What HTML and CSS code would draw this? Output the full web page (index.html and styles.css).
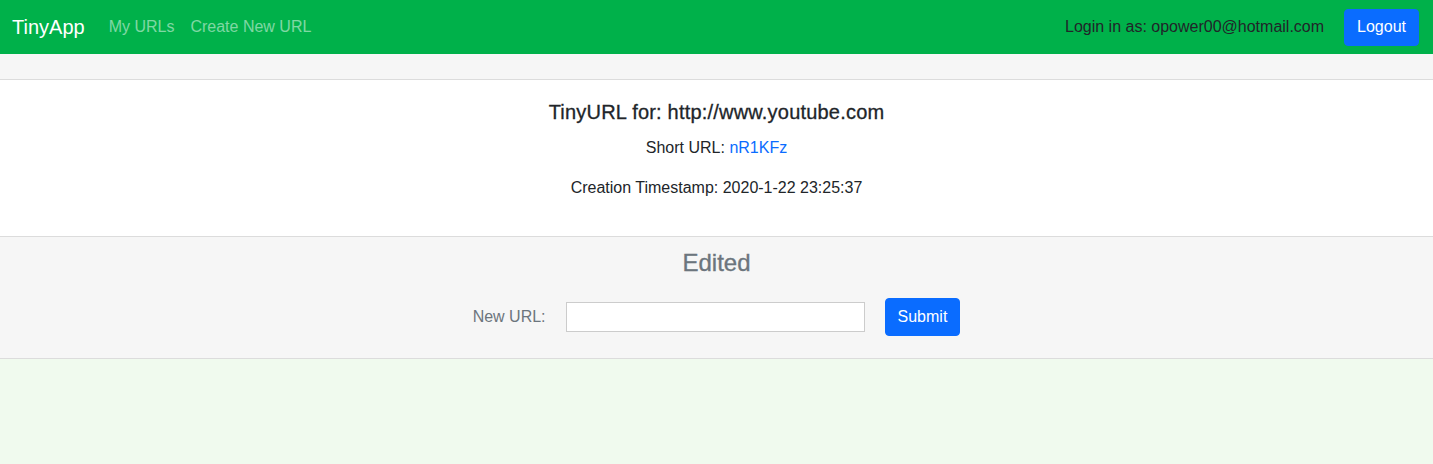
FILE: index.html
```html
<!DOCTYPE html>
<html lang="en">
<head>
<meta charset="utf-8">
<title>TinyApp</title>
<link rel="stylesheet" href="styles.css">
</head>
<body>
<nav class="navbar">
  <div class="nav-left">
    <a class="brand" href="#">TinyApp</a>
    <a class="nav-link" href="#">My URLs</a>
    <a class="nav-link" href="#">Create New URL</a>
  </div>
  <div class="nav-right">
    <span class="login-text">Login in as: opower00@hotmail.com</span>
    <button class="btn btn-primary btn-logout" type="button">Logout</button>
  </div>
</nav>
<main class="card">
  <div class="card-header"></div>
  <div class="card-body">
    <h5 class="card-title">TinyURL for: http://www.youtube.com</h5>
    <p class="card-text">Short URL: <a href="#" class="link">nR1KFz</a></p>
    <p class="card-text">Creation Timestamp: 2020-1-22 23:25:37</p>
  </div>
  <div class="card-footer">
    <h4 class="footer-title">Edited</h4>
    <form class="form-inline">
      <label class="form-label" for="newurl">New URL:</label>
      <input class="form-input" id="newurl" type="text">
      <button class="btn btn-primary btn-submit" type="submit">Submit</button>
    </form>
  </div>
</main>
</body>
</html>
```
FILE: styles.css
```css
* { box-sizing: border-box; }
html, body { margin: 0; padding: 0; }
body {
  font-family: "Liberation Sans", Arial, sans-serif;
  font-size: 16px;
  line-height: 1.5;
  color: #212529;
  background: #f0faee;
  min-height: 464px;
}
.navbar {
  background: #00b14a;
  height: 54px;
  padding: 0 14px 0 12px;
  display: flex;
  align-items: center;
  justify-content: space-between;
}
.nav-left { display: flex; align-items: center; }
.brand {
  color: #fff;
  font-size: 20px;
  text-decoration: none;
  margin-right: 16px;
}
.nav-link {
  color: rgba(255,255,255,0.5);
  text-decoration: none;
  padding: 0 8px;
}
.nav-right { display: flex; align-items: center; gap: 20px; }
.login-text { color: #212529; }
.btn {
  font-family: inherit;
  font-size: 16px;
  line-height: 1.5;
  border: 1px solid #0a6cff;
  background: #0a6cff;
  color: #fff;
  border-radius: 4px;
  padding: 6px 12px;
  cursor: pointer;
}
.btn-logout { height: 37px; padding: 5px 12px; }
.card { background: #fff; }
.card-header {
  height: 26px;
  background: #f6f6f6;
  border-bottom: 1px solid #dcdcdc;
}
.card-body {
  padding: 20px;
  text-align: center;
}
.card-title {
  font-size: 20px;
  font-weight: 500;
  line-height: 1.2;
  margin: 0 0 12px;
  -webkit-text-stroke: 0.3px #212529;
  letter-spacing: 0.2px;
}
.card-text { margin: 0 0 16px; }
.link { color: #0a6cff; text-decoration: none; }
.card-footer {
  background: #f6f6f6;
  border-top: 1px solid #dcdcdc;
  border-bottom: 1px solid #dcdcdc;
  padding: 12px 20px 22px;
  text-align: center;
}
.footer-title {
  font-size: 24px;
  font-weight: 500;
  line-height: 1.2;
  color: #6c757d;
  margin: 0 0 20px;
  -webkit-text-stroke: 0.35px #6c757d;
}
.form-inline {
  display: flex;
  justify-content: center;
  align-items: center;
}
.form-label { color: #6c757d; margin-right: 20px; }
.form-input {
  width: 299px;
  height: 30px;
  border: 1px solid #cccccc;
  background: #fff;
  font-family: inherit;
  font-size: 16px;
  margin-right: 20px;
}
.btn-submit { height: 38px; }
```
